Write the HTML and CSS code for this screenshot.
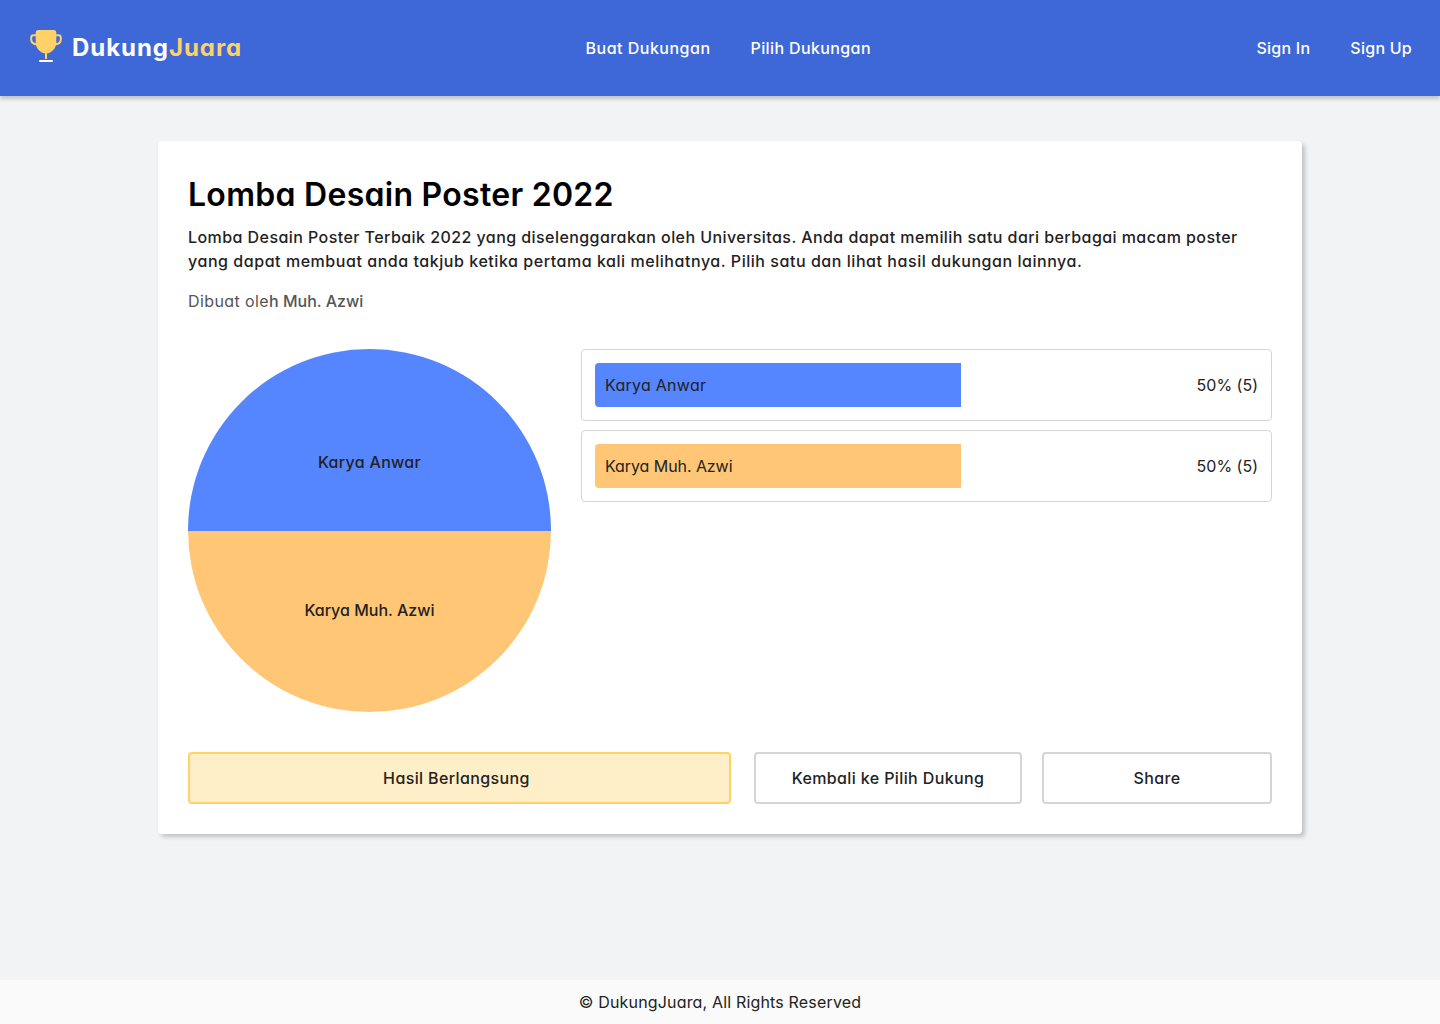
FILE: index.html
```html
<!DOCTYPE html>
<html lang="id">
<head>
  <meta charset="utf-8">
  <title>DukungJuara</title>
  <link rel="stylesheet" href="styles.css">
</head>
<body>
  <header class="navbar">
    <a class="brand">
      <svg class="brand-icon" width="32" height="34" viewBox="0 0 32 34" fill="none">
        <path d="M6 5.200H3.600Q1.200 5.200 1.200 7.600V9.500Q1.200 14 7.500 14.500M26 5.200h2.400Q30.800 5.200 30.800 7.600V9.500Q30.800 14 24.500 14.500" stroke="#ffd166" stroke-width="2"/>
        <path d="M8 0h16Q26.300 0 26.300 2.500V12.500C26.300 18 22 22.700 17 23.400V29h-2v-5.600C10 22.700 5.700 18 5.700 12.500V2.500Q5.700 0 8 0Z" fill="#ffd166"/>
        <path d="M10 31h12" stroke="#fff" stroke-width="2" stroke-linecap="round"/>
      </svg>
      <span class="brand-name">Dukung<span class="brand-accent">Juara</span></span>
    </a>
    <nav class="menu">
      <a class="menu-create">Buat Dukungan</a>
      <a class="menu-pick">Pilih Dukungan</a>
    </nav>
    <nav class="account">
      <a class="sign-in">Sign In</a>
      <a class="sign-up">Sign Up</a>
    </nav>
  </header>

  <main class="page">
    <section class="card">
      <h1 class="title">Lomba Desain Poster 2022</h1>
      <p class="description"><span class="line-one">Lomba Desain Poster Terbaik 2022 yang diselenggarakan oleh Universitas. Anda dapat memilih satu dari berbagai macam poster</span><br><span class="line-two">yang dapat membuat anda takjub ketika pertama kali melihatnya. Pilih satu dan lihat hasil dukungan lainnya.</span></p>
      <p class="author">Dibuat ole<span class="author-name">h Muh. Azwi</span></p>

      <div class="results">
        <div class="pie">
          <div class="slice slice-blue"><span class="pie-anwar">Karya Anwar</span></div>
          <div class="slice slice-orange"><span class="pie-azwi">Karya Muh. Azwi</span></div>
        </div>
        <ul class="bars">
          <li class="bar">
            <div class="bar-fill slice-blue"><span class="bar-anwar">Karya Anwar</span></div>
            <span class="bar-value">50% (5)</span>
          </li>
          <li class="bar">
            <div class="bar-fill slice-orange"><span class="bar-azwi">Karya Muh. Azwi</span></div>
            <span class="bar-value">50% (5)</span>
          </li>
        </ul>
      </div>

      <div class="actions">
        <div class="button status"><span class="label-status">Hasil Berlangsung</span></div>
        <div class="button back"><span class="label-back">Kembali ke Pilih Dukung</span></div>
        <div class="button share"><span class="label-share">Share</span></div>
      </div>
    </section>
  </main>

  <footer class="footer"><span class="copyright">© DukungJuara, All Rights Reserved</span></footer>
</body>
</html>
```

FILE: styles.css
```css
* {
  box-sizing: border-box;
}

body {
  margin: 0;
  height: 1024px;
  display: flex;
  flex-direction: column;
  background: #f2f3f5;
  color: #222;
  font: 400 16px/24px Inter, sans-serif;
  font-feature-settings: "cv11", "calt" 0;
  white-space: nowrap;
}

h1, p, ul {
  margin: 0;
  padding: 0;
}

.navbar {
  height: 96px;
  padding: 0 28px 0 30px;
  display: grid;
  grid-template-columns: 555.5px auto 1fr;
  align-items: center;
  background: #3e68d7;
  color: #fff;
  font-weight: 500;
  box-shadow: 0 3px 4px rgba(0, 0, 0, 0.2);
}

.brand {
  display: flex;
  align-items: center;
  gap: 10px;
}

.brand-icon {
  display: block;
  margin-top: -3px;
}

.brand-name {
  font-size: 24px;
  font-weight: 700;
  letter-spacing: 0.95px;
}

.brand-accent {
  color: #ffd166;
}

.menu,
.account {
  display: flex;
  gap: 40px;
}

.menu-create {
  letter-spacing: 0.5px;
}

.menu-pick {
  letter-spacing: 0.38px;
}

.account {
  justify-content: flex-end;
  letter-spacing: 0.25px;
}

.page {
  flex: 1;
  padding: 45px 138px 0 158px;
}

.card {
  height: 693px;
  padding: 30px;
  background: #fff;
  border-radius: 4px;
  box-shadow: 3px 3px 4px rgba(0, 0, 0, 0.2);
}

.title {
  color: #000;
  font-size: 32px;
  font-weight: 600;
  line-height: 48px;
  letter-spacing: 0.28px;
}

.description {
  margin-top: 6px;
  font-weight: 500;
}

.line-one {
  letter-spacing: 0.434px;
}

.line-two {
  letter-spacing: 0.547px;
}

.author {
  margin-top: 16px;
  color: #555;
  letter-spacing: 0.4px;
}

.author-name {
  font-weight: 500;
  letter-spacing: 0;
}

.results {
  margin-top: 36px;
  display: flex;
  gap: 30px;
}

.pie {
  width: 363px;
  height: 363px;
  border-radius: 50%;
  overflow: hidden;
  font-weight: 500;
}

.slice {
  height: 50%;
  display: flex;
  justify-content: center;
  align-items: flex-start;
  padding-top: 101px;
}

.slice.slice-orange {
  padding-top: 67.5px;
}

.pie-anwar {
  letter-spacing: 0.3px;
}

.slice-blue {
  background: #5585ff;
}

.slice-orange {
  background: #ffc775;
}

.bars {
  flex: 1;
  list-style: none;
  display: flex;
  flex-direction: column;
  gap: 9px;
}

.bar {
  height: 72px;
  padding: 13px;
  display: flex;
  align-items: center;
  justify-content: space-between;
  border: 1px solid #d5d5d5;
  border-radius: 4px;
}

.bar-fill {
  width: 366px;
  height: 44px;
  padding: 10px;
  border-radius: 4px 0 0 4px;
}

.bar-anwar {
  letter-spacing: 0.27px;
}

.bar-azwi {
  letter-spacing: -0.07px;
}

.actions {
  margin-top: 40px;
  display: flex;
}

.button {
  height: 52px;
  display: flex;
  align-items: center;
  justify-content: center;
  border: 2px solid #d5d5d5;
  border-radius: 4px;
  font-weight: 500;
  letter-spacing: 0.38px;
}

.status {
  width: 543px;
  padding-right: 6px;
  background: #ffefc8;
  border-color: #ffd166;
}

.back {
  width: 268px;
  margin: 0 20px 0 23px;
}

.share {
  width: 230px;
}

.footer {
  height: 44px;
  display: flex;
  align-items: center;
  justify-content: center;
  background: #fafafa;
  letter-spacing: 0.17px;
}
```
